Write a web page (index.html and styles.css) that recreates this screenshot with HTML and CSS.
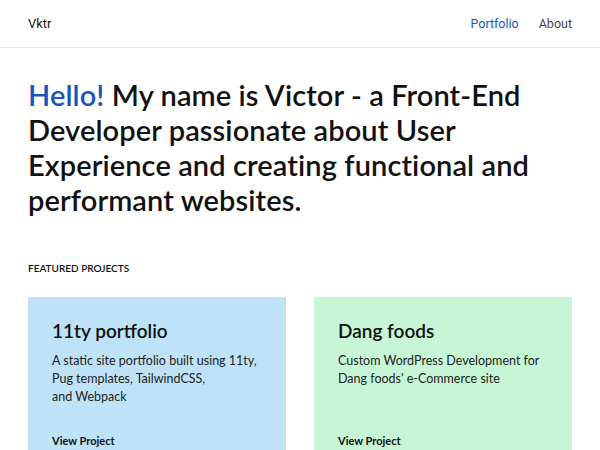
FILE: index.html
```html
<!DOCTYPE html>
<html lang="en">
<head>
<meta charset="utf-8">
<title>Vktr</title>
<link rel="stylesheet" href="styles.css">
</head>
<body>
<header class="site-header">
  <a class="brand" href="#">Vktr</a>
  <nav class="nav">
    <a class="nav-link active" href="#">Portfolio</a>
    <a class="nav-link" href="#">About</a>
  </nav>
</header>
<main class="main">
  <h1 class="hero"><span class="accent">Hello!</span> My name is Victor - a Front-End Developer passionate about User Experience and creating functional and performant websites.</h1>
  <h2 class="section-title">Featured Projects</h2>
  <div class="projects">
    <article class="card card-blue">
      <h3 class="card-title">11ty portfolio</h3>
      <p class="card-text">A static site portfolio built using 11ty,<br>Pug templates, TailwindCSS,<br>and Webpack</p>
      <a class="card-link" href="#">View Project</a>
    </article>
    <article class="card card-green">
      <h3 class="card-title">Dang foods</h3>
      <p class="card-text">Custom WordPress Development for<br>Dang foods' e-Commerce site</p>
      <a class="card-link" href="#">View Project</a>
    </article>
  </div>
</main>
</body>
</html>
```
FILE: styles.css
```css
* { box-sizing: border-box; }
html, body { margin: 0; padding: 0; }
body {
  font-family: Lato, "Open Sans", sans-serif;
  color: #111;
  background: #fff;
  overflow: hidden;
}
a { text-decoration: none; color: inherit; }
.site-header {
  height: 48px;
  display: flex;
  align-items: center;
  justify-content: space-between;
  padding: 0 28px;
  border-bottom: 1px solid #e6e6e6;
  font-family: Roboto, "Liberation Sans", sans-serif;
  font-size: 13px;
}
.brand { color: #111; }
.nav { display: flex; gap: 20px; font-size: 12.5px; }
.nav-link { color: #444; }
.nav-link.active { color: #1a55bf; }
.main { padding: 0 28px; }
.hero {
  margin: 29px 0 0;
  font-size: 29px;
  line-height: 35px;
  font-weight: 600;
  color: #111;
  letter-spacing: 0.1px;
}
.accent { color: #1a55bf; }
.section-title {
  margin: 44px 0 0;
  font-size: 10px;
  line-height: 14px;
  font-weight: 600;
  text-transform: uppercase;
}
.projects {
  margin-top: 22px;
  display: grid;
  grid-template-columns: 1fr 1fr;
  gap: 28px;
}
.card {
  padding: 21px 24px 24px;
  min-height: 170px;
  display: flex;
  flex-direction: column;
}
.card-blue { background: #bee3f8; }
.card-green { background: #c6f6d5; }
.card-title {
  margin: 0;
  font-size: 19px;
  line-height: 26px;
  font-weight: 600;
}
.card-text {
  margin: 8px 0 0;
  font-size: 12.5px;
  line-height: 18px;
  color: #222;
}
.card-link {
  margin-top: auto;
  padding-top: 28px;
  font-size: 11px;
  line-height: 14px;
  font-weight: 700;
}
```
